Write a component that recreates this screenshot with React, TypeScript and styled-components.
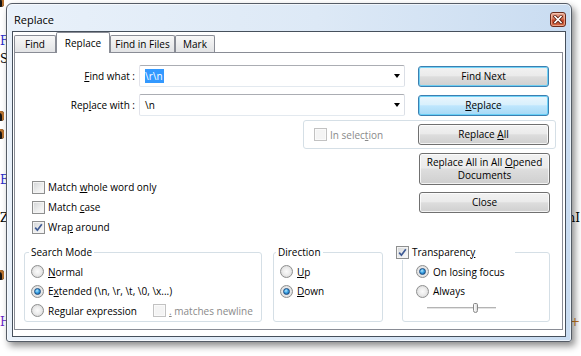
import { ReactNode } from "react";
import styled, { createGlobalStyle } from "styled-components";

const FONT = `"Open Sans", "Noto Sans", "Liberation Sans", sans-serif`;

const GlobalStyle = createGlobalStyle`
  html, body { margin: 0; padding: 0; }
  body {
    background: #fff;
    font-family: ${FONT};
    font-size: 10px;
    color: #000;
  }
  * { box-sizing: border-box; }
`;

const Desktop = styled.div`
  position: relative;
  width: 581px;
  height: 356px;
  overflow: hidden;
  background: #fff;
`;

/* editor text behind the dialog, only its edges show */
const Editor = styled.div`
  display: flex;
  flex-direction: column;
  font-family: "DejaVu Serif", serif;
  font-size: 12px;
`;

const EditorLine = styled.div<{ $h: number }>`
  height: ${(p) => p.$h}px;
  display: flex;
  align-items: center;
  justify-content: space-between;
  padding-right: 1px;
`;

const Code = styled.span<{ $color?: string }>`
  color: ${(p) => p.$color || "#000"};
  line-height: 1;
`;

const Marker = styled.span`
  display: inline-block;
  width: 6px;
  height: 10px;
  margin-left: -2px;
  border-radius: 3px;
  background: #151515;
  box-shadow: inset -2px 2px 0 #b8722e;
`;

const Window = styled.section`
  position: absolute;
  left: 6px;
  top: 3px;
  width: 566px;
  height: 339px;
  display: flex;
  flex-direction: column;
  padding: 0 5px 4px;
  border: 1px solid #555c66;
  border-radius: 6px 6px 3px 3px;
  background: linear-gradient(90deg, #e9f1fa 0%, #dde9f6 55%, #c9dcf1 100%);
  box-shadow: inset 0 0 0 1px rgba(255, 255, 255, 0.6), 3px 4px 7px rgba(0, 0, 0, 0.45);
`;

const TitleBar = styled.header`
  height: 27px;
  display: flex;
  align-items: flex-start;
  justify-content: space-between;
`;

const Title = styled.h1`
  margin: 0;
  padding: 8px 0 0 2px;
  font-size: 11px;
  font-weight: normal;
  line-height: 15px;
  text-shadow: 0 0 6px #fff;
`;

const CloseBtn = styled.div`
  margin-top: 8px;
  width: 16px;
  height: 15px;
  border: 1px solid #6b2b1c;
  border-radius: 3px;
  background: linear-gradient(#e9ab98 0%, #d8775b 45%, #c4472a 55%, #d66b47 100%);
  box-shadow: inset 0 0 0 1px rgba(255, 220, 200, 0.5);
  display: flex;
  align-items: center;
  justify-content: center;
`;

const Client = styled.div`
  flex: 1;
  display: flex;
  flex-direction: column;
  border: 1px solid #46505c;
  background: #fff;
  padding: 0 2px 6px 1px;
`;

const TabStrip = styled.div`
  height: 20px;
  display: flex;
  align-items: flex-end;
`;

const Tab = styled.div<{ $active?: boolean; $w: number }>`
  position: relative;
  z-index: ${(p) => (p.$active ? 1 : 0)};
  width: ${(p) => p.$w}px;
  height: ${(p) => (p.$active ? 21 : 17)}px;
  margin-bottom: ${(p) => (p.$active ? -1 : 0)}px;
  border: 1px solid #898c95;
  border-bottom: none;
  border-radius: 2px 2px 0 0;
  background: ${(p) => (p.$active ? "#fff" : "linear-gradient(#f8f8f8, #e2e3e5)")};
  display: flex;
  align-items: center;
  justify-content: center;
  white-space: nowrap;
`;

const Page = styled.div`
  height: 278px;
  border: 1px solid #898c95;
  background: #fff;
  padding-top: 12px;
`;

const TopGrid = styled.div`
  display: grid;
  grid-template-columns: 124px 164px 102px 13px 131px 7px;
  grid-template-rows: 29px 26px 29px;
  align-items: start;
`;

const FieldLabel = styled.label`
  grid-column: 1;
  justify-self: end;
  padding-right: 4px;
  line-height: 22px;
  white-space: nowrap;
`;

const Combo = styled.div`
  grid-column: 2 / 4;
  height: 22px;
  display: flex;
  align-items: center;
  padding: 0 4px 0 5px;
  border: 1px solid #abadb3;
  border-color: #abadb3 #dbdfe6 #e3e9ef #e2e3ea;
  border-radius: 2px;
  background: #fff;
`;

const Selected = styled.span`
  background: #3399ff;
  color: #fff;
  line-height: 14px;
  padding-right: 1px;
`;

const Arrow = styled.span`
  margin-left: auto;
  width: 0;
  height: 0;
  border-left: 3.5px solid transparent;
  border-right: 3.5px solid transparent;
  border-top: 4px solid #000;
`;

const Button = styled.button<{ $look?: "default" | "hot"; $h?: number; $col?: boolean }>`
  grid-column: ${(p) => (p.$col ? "5" : "auto")};
  width: 131px;
  height: ${(p) => p.$h ?? 21}px;
  margin-top: ${(p) => (p.$col ? 1 : 0)}px;
  padding: 0;
  border: 1px solid ${(p) => (p.$look ? "#3c7fb1" : "#707070")};
  border-radius: 3px;
  font: inherit;
  font-size: 10px;
  line-height: 13px;
  color: #000;
  white-space: nowrap;
  background: ${(p) =>
    p.$look === "hot"
      ? "linear-gradient(#eaf6fd 0%, #d9f0fc 45%, #bee6fd 52%, #a7d9f5 100%)"
      : "linear-gradient(#f2f2f2 0%, #ebebeb 45%, #dddddd 52%, #cfcfcf 100%)"};
  box-shadow: inset 0 0 0 1px ${(p) => (p.$look ? "rgba(94, 206, 247, 0.85)" : "rgba(255, 255, 255, 0.75)")};
`;

const SelectionGroup = styled.div`
  grid-column: 3 / 7;
  height: 29px;
  display: flex;
  align-items: center;
  padding: 0 6px 0 10px;
  border: 1px solid #d5dfe6;
  border-radius: 3px;
  justify-content: space-between;
`;

const Lower = styled.div`
  height: 88px;
  display: flex;
  justify-content: space-between;
`;

const Options = styled.div`
  display: flex;
  flex-direction: column;
  padding: 28px 0 0 17px;
`;

const SideButtons = styled.div`
  display: flex;
  flex-direction: column;
  gap: 7px;
  padding-top: 4px;
  margin-right: 12px;
`;

const Row = styled.label<{ $h?: number; $disabled?: boolean }>`
  height: ${(p) => p.$h ?? 20}px;
  display: flex;
  align-items: center;
  gap: 3px;
  white-space: nowrap;
  color: ${(p) => (p.$disabled ? "#8a8a8a" : "#000")};
`;

const Box = styled.span<{ $disabled?: boolean }>`
  flex: none;
  width: 13px;
  height: 13px;
  display: flex;
  align-items: center;
  justify-content: center;
  border: 1px solid ${(p) => (p.$disabled ? "#c2c2c2" : "#8e8f8f")};
  background: ${(p) =>
    p.$disabled ? "#f4f4f4" : "linear-gradient(135deg, #d2d4d6 0%, #eceded 55%, #fbfbfb 100%)"};
  box-shadow: inset 0 0 0 1px ${(p) => (p.$disabled ? "#fafafa" : "#f3f3f3")};
`;

const Dot = styled.span<{ $on?: boolean }>`
  position: relative;
  flex: none;
  width: 13px;
  height: 13px;
  border-radius: 50%;
  border: 1px solid #8e8f8f;
  background: radial-gradient(circle, #fbfbfb 0%, #ececec 45%, #cfcfcf 100%);

  &::after {
    content: "";
    display: ${(p) => (p.$on ? "block" : "none")};
    position: absolute;
    inset: 2px;
    border-radius: 50%;
    border: 1px solid #1b4c80;
    background: radial-gradient(circle at 40% 35%, #b6e8ff 0%, #3ba3e4 45%, #0f4f93 100%);
  }
`;

const Groups = styled.div`
  display: flex;
  margin-top: 8px;
  padding-left: 9px;
`;

const Group = styled.fieldset<{ $w: number; $pad?: number; $gap?: number }>`
  width: ${(p) => p.$w}px;
  height: 77px;
  min-width: 0;
  margin: 0 ${(p) => p.$gap ?? 0}px 0 0;
  padding: 2px 0 0 ${(p) => p.$pad ?? 6}px;
  border: 1px solid #d5dfe6;
  border-radius: 3px;
`;

const Legend = styled.legend<{ $offset?: number; $w?: number }>`
  display: flex;
  align-items: center;
  gap: 3px;
  width: ${(p) => (p.$w ? `${p.$w}px` : "auto")};
  margin-left: ${(p) => p.$offset ?? -2}px;
  padding: 0 ${(p) => (p.$w ? 0 : 2)}px;
  line-height: 15px;
  font-size: 10px;
`;

const NewlineOption = styled(Row)`
  margin-left: 12px;
`;

const Slider = styled.div`
  position: relative;
  width: 69px;
  height: 14px;
  margin-left: 11px;
  display: flex;
  align-items: center;
`;

const Track = styled.div`
  width: 100%;
  height: 3px;
  border-top: 1px solid #b4b4b4;
  border-bottom: 1px solid #fff;
  background: #e4e4e4;
`;

const Thumb = styled.div`
  position: absolute;
  left: 46px;
  top: 2px;
  width: 5px;
  height: 10px;
  border: 1px solid #878787;
  border-radius: 2px 2px 3px 3px;
  background: linear-gradient(90deg, #ffffff, #dcdcdc);
`;

const Check = () => (
  <svg width="9" height="9" viewBox="0 0 9 9">
    <path d="M1.2 4.6 L3.4 7.2 L7.8 1.2" fill="none" stroke="#3e5a94" strokeWidth="1.7" />
  </svg>
);

const CloseGlyph = () => (
  <svg width="10" height="9" viewBox="0 0 10 9">
    <path d="M2 1.5 L8 7.5 M8 1.5 L2 7.5" stroke="#5a1e10" strokeWidth="3.2" strokeLinecap="square" />
    <path d="M2 1.5 L8 7.5 M8 1.5 L2 7.5" stroke="#fff" strokeWidth="1.6" strokeLinecap="square" />
  </svg>
);

function CheckBox({ label, checked, disabled }: { label: ReactNode; checked?: boolean; disabled?: boolean }) {
  return (
    <Row $disabled={disabled}>
      <Box $disabled={disabled}>{checked && <Check />}</Box>
      <span>{label}</span>
    </Row>
  );
}

function Radio({ label, on, children }: { label: ReactNode; on?: boolean; children?: ReactNode }) {
  return (
    <Row $h={19.5} style={{ gap: 4 }}>
      <Dot $on={on} />
      <span>{label}</span>
      {children}
    </Row>
  );
}

const backdrop: { h: number; left?: ReactNode; right?: ReactNode }[] = [
  { h: 6, left: <Marker /> },
  { h: 27 },
  { h: 16, left: <Code $color="#2c2cc8">F</Code> },
  { h: 20, left: <Code>S</Code> },
  { h: 39 },
  { h: 18, left: <Marker /> },
  { h: 18, left: <Marker /> },
  { h: 28 },
  { h: 16, left: <Code $color="#2c2cc8">E</Code> },
  { h: 22 },
  { h: 16, left: <Code>Z</Code>, right: <Code>nI</Code> },
  { h: 42 },
  { h: 16, left: <Marker /> },
  { h: 30 },
  { h: 16, left: <Code $color="#6a1fc8">H</Code>, right: <Code>5<span style={{ color: "#c8781e" }}>+</span></Code> },
];

export default function App() {
  return (
    <>
      <GlobalStyle />
      <Desktop>
        <Editor>
          {backdrop.map((line, i) => (
            <EditorLine key={i} $h={line.h}>
              <span>{line.left}</span>
              <span>{line.right}</span>
            </EditorLine>
          ))}
        </Editor>

        <Window>
          <TitleBar>
            <Title>Replace</Title>
            <CloseBtn>
              <CloseGlyph />
            </CloseBtn>
          </TitleBar>

          <Client>
            <TabStrip>
              <Tab $w={42}>Find</Tab>
              <Tab $w={54} $active>Replace</Tab>
              <Tab $w={65}>Find in Files</Tab>
              <Tab $w={40}>Mark</Tab>
            </TabStrip>

            <Page>
              <TopGrid>
                <FieldLabel>
                  <u>F</u>ind what :
                </FieldLabel>
                <Combo>
                  <Selected>\r\n</Selected>
                  <Arrow />
                </Combo>
                <Button $col $look="default">Find Next</Button>

                <FieldLabel>
                  Rep<u>l</u>ace with :
                </FieldLabel>
                <Combo>
                  <span>\n</span>
                  <Arrow />
                </Combo>
                <Button $col $look="hot">
                  <u>R</u>eplace
                </Button>

                <SelectionGroup>
                  <CheckBox disabled label={<>In selec<u>t</u>ion</>} />
                  <Button>
                    Replace <u>A</u>ll
                  </Button>
                </SelectionGroup>
              </TopGrid>

              <Lower>
                <Options>
                  <CheckBox label={<>Match <u>w</u>hole word only</>} />
                  <CheckBox label={<>Match <u>c</u>ase</>} />
                  <CheckBox checked label={<>Wra<u>p</u> around</>} />
                </Options>
                <SideButtons>
                  <Button $h={32}>
                    Replace All in All <u>O</u>pened
                    <br />
                    Documents
                  </Button>
                  <Button>Close</Button>
                </SideButtons>
              </Lower>

              <Groups>
                <Group $w={238} $gap={11}>
                  <Legend>Search Mode</Legend>
                  <Radio label={<><u>N</u>ormal</>} />
                  <Radio on label={<>E<u>x</u>tended (\n, \r, \t, \0, \x...)</>} />
                  <Radio label={<>Re<u>g</u>ular expression</>}>
                    <NewlineOption $disabled>
                      <Box $disabled />
                      <span>
                        <u>.</u> matches newline
                      </span>
                    </NewlineOption>
                  </Radio>
                </Group>

                <Group $w={110} $gap={19}>
                  <Legend $offset={-4}>Direction</Legend>
                  <Radio label={<><u>U</u>p</>} />
                  <Radio on label={<><u>D</u>own</>} />
                </Group>

                <Group $w={148} $pad={13}>
                  <Legend $offset={-20} $w={119}>
                    <Box>
                      <Check />
                    </Box>
                    <span>
                      Transparenc<u>y</u>
                    </span>
                  </Legend>
                  <Radio on label="On losing focus" />
                  <Radio label="Always" />
                  <Slider>
                    <Track />
                    <Thumb />
                  </Slider>
                </Group>
              </Groups>
            </Page>
          </Client>
        </Window>
      </Desktop>
    </>
  );
}
